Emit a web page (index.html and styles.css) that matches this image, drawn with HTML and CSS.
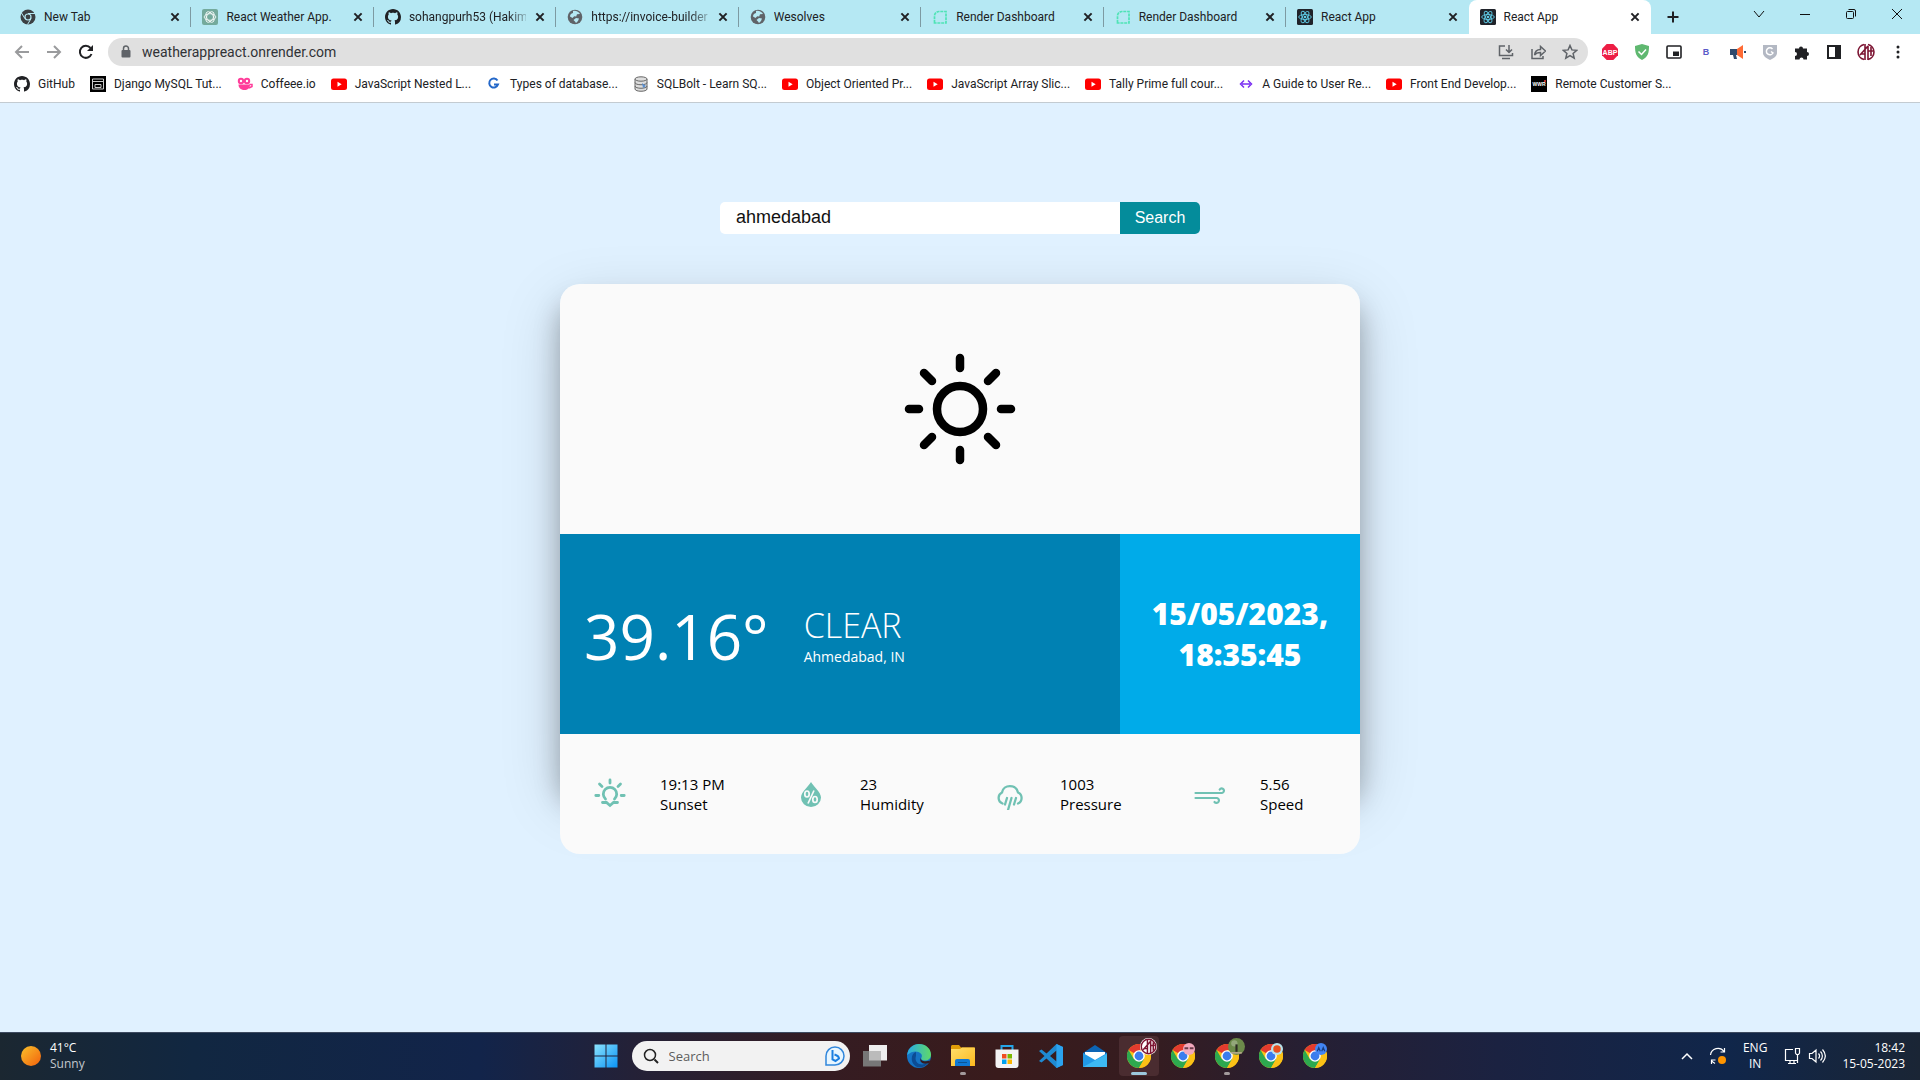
FILE: index.html
```html
<!DOCTYPE html>
<html lang="en">
<head>
<meta charset="utf-8">
<title>React App</title>
<link rel="stylesheet" href="styles.css">
</head>
<body>
<svg class="defs" aria-hidden="true">
  <defs>
    <linearGradient id="g-win" x1="0" y1="0" x2="1" y2="1"><stop offset="0" stop-color="#8be3fd"/><stop offset="1" stop-color="#0a93f5"/></linearGradient>
    <linearGradient id="g-edge" x1="0" y1="0" x2="1" y2="0"><stop offset="0" stop-color="#27a9e6"/><stop offset="1" stop-color="#5fd968"/></linearGradient>
    <linearGradient id="g-folder" x1="0" y1="0" x2="1" y2="1"><stop offset="0" stop-color="#ffdf6b"/><stop offset="1" stop-color="#fbb81e"/></linearGradient>
    <linearGradient id="g-sun" x1="0" y1="0" x2="1" y2="1"><stop offset="0" stop-color="#f9c22b"/><stop offset="1" stop-color="#f2600c"/></linearGradient>
  </defs>
  <symbol id="close" viewBox="0 0 10 10"><path d="M2 2l6 6M8 2L2 8" stroke="#202124" stroke-width="1.7"/></symbol>
  <symbol id="github" viewBox="0 0 16 16"><path fill="#202124" d="M8 0C3.58 0 0 3.58 0 8c0 3.54 2.29 6.53 5.47 7.59.4.07.55-.17.55-.38 0-.19-.01-.82-.01-1.49-2.01.37-2.53-.49-2.69-.94-.09-.23-.48-.94-.82-1.13-.28-.15-.68-.52-.01-.53.63-.01 1.08.58 1.23.82.72 1.21 1.87.87 2.33.66.07-.52.28-.87.51-1.07-1.78-.2-3.64-.89-3.64-3.95 0-.87.31-1.59.82-2.15-.08-.2-.36-1.02.08-2.12 0 0 .67-.21 2.2.82.64-.18 1.32-.27 2-.27s1.36.09 2 .27c1.53-1.04 2.2-.82 2.2-.82.44 1.1.16 1.92.08 2.12.51.56.82 1.27.82 2.15 0 3.07-1.87 3.75-3.65 3.95.29.25.54.73.54 1.48 0 1.07-.01 1.93-.01 2.2 0 .21.15.46.55.38A8.01 8.01 0 0016 8c0-4.42-3.58-8-8-8z"/></symbol>
  <symbol id="globe" viewBox="0 0 16 16"><circle cx="8" cy="8" r="7.3" fill="#5f6368"/><path d="M6 2c3-.6 6 1 7 3l-3 .3-.8 2.2-2-.2L5.500 9 3 7.500c0-2 1-3 3-3.500zM9 9l3 .5L11 12l-2 2-1-1.500L6.500 11z" fill="#b6e9f3"/></symbol>
  <symbol id="render" viewBox="0 0 16 16"><path d="M2.500 14V7a4.500 4.500 0 014.500-4.500h7V14z" fill="none" stroke="#4fe3b6" stroke-width="1.700" stroke-dasharray="3 .8"/></symbol>
  <symbol id="react" viewBox="0 0 16 16"><rect width="16" height="16" rx="1.500" fill="#20232a"/><g fill="none" stroke="#5fcbe6" stroke-width=".9"><ellipse cx="8" cy="8" rx="6.300" ry="2.500"/><ellipse cx="8" cy="8" rx="6.300" ry="2.500" transform="rotate(60 8 8)"/><ellipse cx="8" cy="8" rx="6.300" ry="2.500" transform="rotate(120 8 8)"/></g><circle cx="8" cy="8" r="1.300" fill="#5fcbe6"/></symbol>
  <symbol id="yt" viewBox="0 0 16 16"><rect y="2.500" width="16" height="11.500" rx="2.500" fill="#f00"/><path d="M6.500 5.800v5l4.200-2.500z" fill="#fff"/></symbol>
  <symbol id="chrome" viewBox="0 0 24 24"><circle cx="12" cy="12" r="12" fill="#fbc116"/><path d="M12 12L1.600 6A12 12 0 0122.400 6H12z" fill="#e33b2e"/><path d="M1.600 6A12 12 0 0012 24l5.200-9L12 12 6.800 15z" fill="#2da94f"/><path d="M22.400 6H12l5.200 9L12 24A12 12 0 0022.400 6z" fill="#fbc116"/><circle cx="12" cy="12" r="5.800" fill="#fff"/><circle cx="12" cy="12" r="4.400" fill="#3b7ded"/></symbol>
</svg>

<header class="browser">
  <div class="tabstrip">
    <div class="tabs">
      <div class="tab"><svg class="i16" viewBox="0 0 16 16"><circle cx="8" cy="8" r="7.500" fill="#3c4043"/><path d="M8 4.500h7M5 9.700L1.500 4M11 9.700L7.500 15.500" stroke="#b6e9f3" stroke-width="1"/><circle cx="8" cy="8" r="3.600" fill="#b6e9f3"/><circle cx="8" cy="8" r="2.400" fill="#3c4043"/></svg><span class="title">New Tab</span><button class="x" aria-label="Close tab"><svg><use href="#close"/></svg></button></div>
      <div class="tab"><svg class="i16" viewBox="0 0 16 16"><rect width="16" height="16" rx="2" fill="#74aa9c"/><g fill="none" stroke="#fff" stroke-width=".8"><ellipse cx="8" cy="8" rx="5.800" ry="3.300"/><ellipse cx="8" cy="8" rx="5.800" ry="3.300" transform="rotate(60 8 8)"/><ellipse cx="8" cy="8" rx="5.800" ry="3.300" transform="rotate(120 8 8)"/></g></svg><span class="title">React Weather App.</span><button class="x" aria-label="Close tab"><svg><use href="#close"/></svg></button></div>
      <div class="tab"><svg class="i16"><use href="#github"/></svg><span class="title fade">sohangpurh53 (Hakim</span><button class="x" aria-label="Close tab"><svg><use href="#close"/></svg></button></div>
      <div class="tab"><svg class="i16"><use href="#globe"/></svg><span class="title fade">https://invoice-builder</span><button class="x" aria-label="Close tab"><svg><use href="#close"/></svg></button></div>
      <div class="tab"><svg class="i16"><use href="#globe"/></svg><span class="title">Wesolves</span><button class="x" aria-label="Close tab"><svg><use href="#close"/></svg></button></div>
      <div class="tab"><svg class="i16"><use href="#render"/></svg><span class="title">Render Dashboard</span><button class="x" aria-label="Close tab"><svg><use href="#close"/></svg></button></div>
      <div class="tab"><svg class="i16"><use href="#render"/></svg><span class="title">Render Dashboard</span><button class="x" aria-label="Close tab"><svg><use href="#close"/></svg></button></div>
      <div class="tab last"><svg class="i16"><use href="#react"/></svg><span class="title">React App</span><button class="x" aria-label="Close tab"><svg><use href="#close"/></svg></button></div>
      <div class="tab active"><svg class="i16"><use href="#react"/></svg><span class="title">React App</span><button class="x" aria-label="Close tab"><svg><use href="#close"/></svg></button></div>
    </div>
    <button class="newtab" aria-label="New tab"><svg width="14" height="14" viewBox="0 0 14 14"><path d="M7 1.500v11M1.500 7h11" stroke="#202124" stroke-width="2"/></svg></button>
    <div class="winctl">
      <button aria-label="Search tabs"><svg width="12" height="12" viewBox="0 0 12 12"><path d="M1 3l5 6 5-6"/></svg></button>
      <button aria-label="Minimize"><svg width="12" height="12" viewBox="0 0 12 12"><path d="M1 6.500h10"/></svg></button>
      <button aria-label="Restore"><svg width="12" height="12" viewBox="0 0 12 12"><rect x="1.500" y="3.500" width="7" height="7" rx="1"/><path d="M3.500 1.500H9a1.500 1.500 0 011.500 1.500v5.500"/></svg></button>
      <button aria-label="Close"><svg width="12" height="12" viewBox="0 0 12 12"><path d="M1 1l10 10M11 1L1 11"/></svg></button>
    </div>
  </div>

  <div class="toolbar">
    <nav class="navbtns">
      <button aria-label="Back"><svg class="i16 dim" viewBox="0 0 16 16"><path d="M15 8H2M8 2L2 8l6 6"/></svg></button>
      <button aria-label="Forward"><svg class="i16 dim" viewBox="0 0 16 16"><path d="M1 8h13M8 2l6 6-6 6"/></svg></button>
      <button aria-label="Reload"><svg class="i16" viewBox="0 0 16 16"><path d="M13.500 10A6 6 0 1112.500 4" fill="none" stroke="#202124" stroke-width="2"/><path d="M15 1v6H9z" fill="#202124"/></svg></button>
    </nav>
    <div class="omnibox">
      <svg class="i16" viewBox="0 0 16 16"><rect x="3.500" y="6" width="9" height="7.500" rx="1" fill="#5f6368"/><path d="M5.500 6V4.500a2.500 2.500 0 015 0V6" fill="none" stroke="#5f6368" stroke-width="1.500"/></svg>
      <input class="url" type="text" aria-label="Address" value="weatherappreact.onrender.com">
      <div class="omni-icons">
        <svg class="i16" viewBox="0 0 16 16"><path d="M7 2H1.500v9.500h13V9M4 14.500h8M11 1v7M8 5.500l3 3 3-3"/></svg>
        <svg class="i16" viewBox="0 0 16 16"><path d="M2 5v9.500h11V12M4.500 11c.5-4 3-5.500 6-5.500V2.500L15.500 7l-5 4.500V8.500c-3 0-5 1-6 2.500z"/></svg>
        <svg class="i16" viewBox="0 0 16 16"><path d="M8 1.500l1.900 4.400 4.800.4-3.600 3.200 1.100 4.700L8 11.700l-4.200 2.500 1.100-4.700L1.300 6.300l4.800-.4z"/></svg>
      </div>
    </div>
    <div class="exts">
      <svg class="i16" viewBox="0 0 16 16"><path d="M4.700 0h6.600L16 4.700v6.600L11.300 16H4.700L0 11.300V4.700z" fill="#ed1e45"/><text x="8" y="10.500" text-anchor="middle" class="abp">ABP</text></svg>
      <svg class="i16" viewBox="0 0 16 16"><path d="M8 0l7 2c0 7-1 11-7 14C2 13 1 9 1 2z" fill="#5fb870"/><path d="M4.500 7.500l3 3 4.500-5" fill="none" stroke="#fff" stroke-width="1.500"/></svg>
      <svg class="i16" viewBox="0 0 16 16"><rect x="1" y="2" width="14" height="12" rx="1" fill="none" stroke="#202124" stroke-width="1.600"/><rect x="7" y="7.500" width="6" height="4.500" fill="#202124"/></svg>
      <svg class="i16" viewBox="0 0 16 16"><text x="8" y="11" text-anchor="middle" class="bee">B</text></svg>
      <svg class="i16" viewBox="0 0 16 16"><path d="M0 5h8v6H6l1 4H4L3 11H0z" fill="#2f4a6d"/><path d="M7 5l6-4v14l-6-4z" fill="#ff6b35"/><path d="M14 7h2v2h-2z" fill="#2f4a6d"/></svg>
      <svg class="i16" viewBox="0 0 16 16"><path d="M1 1h14v8c0 3-3 5-7 7-4-2-7-4-7-7z" fill="#b3b8c3"/><path d="M10.500 5a3.500 3.500 0 10.500 4L9 7.500" fill="none" stroke="#fff" stroke-width="1.500"/></svg>
      <svg class="i16" viewBox="0 0 16 16"><path d="M1 4.500h4a2 2 0 114 0h4v3.500a2 2 0 110 4v3.500H9.500a2 2 0 10-4 0H1V12a2 2 0 100-4z" fill="#202124"/></svg>
      <svg class="i16" viewBox="0 0 16 16"><rect x="2" y="2" width="12" height="12" fill="none" stroke="#202124" stroke-width="2"/><path d="M9 2h5v12H9z" fill="#202124"/></svg>
      <svg class="i18" viewBox="0 0 18 18"><g fill="none" stroke="#7c1432" stroke-width="1.600"><path d="M7 1.500A7.700 7.700 0 007 16.500M11 1.500A7.700 7.700 0 0111 16.500"/><path d="M8 1v16M11 3v14M3 12l8-9M4 11h4M11 8h5M14 4v9"/></g></svg>
      <svg class="i16" viewBox="0 0 16 16" fill="#202124"><circle cx="8" cy="3" r="1.500"/><circle cx="8" cy="8" r="1.500"/><circle cx="8" cy="13" r="1.500"/></svg>
    </div>
  </div>

  <nav class="bookmarks">
    <a href="#"><svg class="i16"><use href="#github"/></svg>GitHub</a>
    <a href="#"><svg class="i16" viewBox="0 0 16 16"><path d="M0 0h16v16H0z" fill="#000"/><path d="M2.500 3h11v10h-11zM3 5.500h10M5 8.500h6v3H5z" fill="none" stroke="#ccc"/></svg>Django MySQL Tut...</a>
    <a href="#"><svg class="i16" viewBox="0 0 16 16"><path d="M1.500 8.500h11.500c0 4-2.500 5.500-5.500 5.500s-6-1.500-6-5.500z" fill="#ff3d9a"/><g fill="none" stroke="#ff3d9a" stroke-width="2"><circle cx="4" cy="5" r="2.200"/><circle cx="10" cy="5" r="2.200"/><path d="M12.500 8.500H15v2l-3 1.500" stroke-width="1.500"/></g></svg>Coffeee.io</a>
    <a href="#"><svg class="i16"><use href="#yt"/></svg>JavaScript Nested L...</a>
    <a href="#"><svg class="i16" viewBox="0 0 16 16"><path d="M11.500 4.500A4.500 4.500 0 1012 8.500H8" fill="none" stroke="#2468c9" stroke-width="2"/></svg>Types of database...</a>
    <a href="#"><svg class="i16" viewBox="0 0 16 16"><g fill="#ddd" stroke="#666"><path d="M2 3v10c0 3 12 3 12 0V3"/><ellipse cx="8" cy="3" rx="6" ry="2.200"/><path d="M2 6.500c0 3 12 3 12 0M2 10c0 3 12 3 12 0" fill="none"/></g><path d="M9 7l4 3-3 2z" fill="#5a8fd0"/></svg>SQLBolt - Learn SQ...</a>
    <a href="#"><svg class="i16"><use href="#yt"/></svg>Object Oriented Pr...</a>
    <a href="#"><svg class="i16"><use href="#yt"/></svg>JavaScript Array Slic...</a>
    <a href="#"><svg class="i16"><use href="#yt"/></svg>Tally Prime full cour...</a>
    <a href="#"><svg class="i16" viewBox="0 0 16 16"><path d="M6 4.500L2.500 8 6 11.500M10 4.500L13.500 8 10 11.500M4 8h8" fill="none" stroke="#7b2ff2" stroke-width="1.500"/></svg>A Guide to User Re...</a>
    <a href="#"><svg class="i16"><use href="#yt"/></svg>Front End Develop...</a>
    <a href="#"><svg class="i16" viewBox="0 0 16 16"><path d="M0 0h16v16H0z" fill="#000"/><text x="8" y="10" text-anchor="middle" class="wwr">WWR</text><circle cx="14" cy="5" r="1" fill="#e33"/></svg>Remote Customer S...</a>
  </nav>
</header>

<main class="page">
  <form class="search" onsubmit="return false">
    <input type="text" aria-label="City" value="ahmedabad">
    <button type="submit">Search</button>
  </form>

  <article class="card">
    <section class="hero">
      <svg width="112" height="112" viewBox="0 0 112 112" fill="none" stroke="#000" stroke-width="8.500" stroke-linecap="round"><circle cx="56" cy="56" r="23"/><path d="M56 5v10M56 97v10M5 56h10M97 56h10M20 20l8 8M84 28l8-8M20 92l8-8M84 84l8 8"/></svg>
    </section>
    <section class="band">
      <div class="now">
        <div class="temp">39.16°</div>
        <div class="desc"><div class="cond">CLEAR</div><div class="place">Ahmedabad, IN</div></div>
      </div>
      <div class="date">15/05/2023, 18:35:45</div>
    </section>
    <section class="stats">
      <div class="stat"><svg viewBox="0 -1 32 32" class="line"><path d="M16 1v3M5.500 5l2.500 2.500M26.500 5L24 7.500M1.800 16.500h3M27.200 16.500h3M11.500 20A6.700 6.700 0 1120.500 20M8.500 23.500h4l3.500 3 3.500-3h4" stroke-width="2.800"/></svg><div>19:13 PM<br>Sunset</div></div>
      <div class="stat"><svg viewBox="-1 -1 32 32"><path d="M16 3c2 4 10 10 10 15.500a10 9.500 0 01-20 0C6 13 14 7 16 3z" fill="#70c1b3"/><g fill="none" stroke="#fafafa" stroke-width="1.700"><ellipse cx="12" cy="15" rx="2.200" ry="3"/><ellipse cx="20" cy="20.500" rx="2.200" ry="3"/><path d="M19 11.500l-6 13"/></g></svg><div>23<br>Humidity</div></div>
      <div class="stat"><svg viewBox="-1 -3 32 32" class="line"><path d="M7.500 22.500A6 6 0 017 11.500C8.500 3 21 3 23 11.500A6 6 0 0123 22.500M12 17l-2 6.500M16.500 17l-3.500 12M21 17l-2 6.500" stroke-width="2.300"/></svg><div>1003<br>Pressure</div></div>
      <div class="stat"><svg viewBox="0 -1 32 32" class="line"><path d="M1.500 14h26.500a2.300 2.300 0 10-2.300-3.500M1.500 19h21.500a2.500 2.500 0 11-2.500 4" stroke-width="2.200"/></svg><div>5.56<br>Speed</div></div>
    </section>
  </article>
</main>

<footer class="taskbar">
  <div class="weather">
    <svg width="20" height="20" viewBox="0 0 20 20"><circle cx="10" cy="10" r="10" fill="url(#g-sun)"/></svg>
    <div>41°C<br><span>Sunny</span></div>
  </div>
  <div class="apps">
    <button class="app" aria-label="Start"><svg viewBox="0 0 24 24" fill="url(#g-win)"><path d="M.5.5h11v11H.5zM12.500.5h11v11h-11zM.5 12.500h11v11H.5zM12.500 12.500h11v11h-11z"/></svg></button>
    <label class="tsearch">
      <svg width="16" height="16" viewBox="0 0 16 16"><path d="M11.500 11.500L15 15" stroke="#222" stroke-width="2"/><circle cx="7" cy="7" r="5.500" fill="none" stroke="#222" stroke-width="1.500"/></svg>
      <input type="text" placeholder="Search" aria-label="Search Windows">
      <svg width="20" height="20" viewBox="0 0 20 20"><path d="M1 19V10a9 9 0 119 9z" fill="#e8f6ff" stroke="#3187dc" stroke-width="1.500"/><path d="M7.500 4v9.500l3 1.500 3.500-2.500c0-2-1.500-3-4.500-4" fill="none" stroke="#1b7fe0" stroke-width="2"/></svg>
    </label>
    <button class="app" aria-label="Task view"><svg viewBox="0 0 24 24"><path d="M6 1h18v15.500H6z" fill="#eee"/><path d="M0 7h18v15.500H0z" fill="#777"/><path d="M6 7h12v9.500H6z" fill="#bbb"/></svg></button>
    <button class="app" aria-label="Edge"><svg viewBox="0 0 24 24"><circle cx="12" cy="12" r="12" fill="#1573c4"/><path d="M.2 11C1 4 6 0 12 0c7 0 12 5 12 10.500 0 4-3 6-6 6s-4.500-1.500-3.500-3C17 9 8 4 .2 11z" fill="url(#g-edge)"/><path d="M9 12c-2 6 3 11 12 7-4 6-14 6-16-2-1-5 1-8 4-9z" fill="#0c4c94"/><path d="M14 13.500c-1 3 3 5 9.500 3l-1.500 2.500c-6 2-10.500-1-8-5.500z" fill="#321c22"/></svg></button>
    <button class="app run" aria-label="File Explorer"><svg viewBox="0 0 24 24"><path d="M0 2.500C0 1.700.7 1 1.500 1H8l2 2.500h13V10H0z" fill="#e09c08"/><path d="M0 5h9l2-1.500h13V22H0z" fill="url(#g-folder)"/><path d="M4 22v-5a2 2 0 012-2h11a2 2 0 012 2v5z" fill="#0f78d4"/><path d="M7 18.500h9" stroke="#0a5597"/></svg></button>
    <button class="app" aria-label="Microsoft Store"><svg viewBox="0 0 24 24"><path d="M6.500 6V2h11v4" fill="none" stroke="#25a6e8" stroke-width="2"/><path d="M.5 5.500h23V21a3 3 0 01-3 3h-17a3 3 0 01-3-3z" fill="#f3f3f3"/><path d="M7 10h4.500v4.500H7z" fill="#f04d22"/><path d="M12.500 10H17v4.500h-4.500z" fill="#7bb800"/><path d="M7 15.500h4.500V20H7z" fill="#00a1ee"/><path d="M12.500 15.500H17V20h-4.500z" fill="#fcb500"/></svg></button>
    <button class="app" aria-label="Visual Studio Code"><svg viewBox="0 0 24 24"><path d="M17.500 0L24 3v18l-6.500 3L7.500 14.500 2.500 18.500 0 17l5.500-5L0 7l2.500-1.500 5 4zM17.500 6.500L11 12l6.500 5.500z" fill="#1f8ad2" fill-rule="evenodd"/><path d="M17.500 0L24 3v18l-6.500 3z" fill="#2ba3ef"/></svg></button>
    <button class="app" aria-label="Mail"><svg viewBox="0 0 24 24"><path d="M0 9L12 1l12 8v14H0z" fill="#0c65b5"/><path d="M2 8h20v8H2z" fill="#fff"/><path d="M0 9l12 7 12-7v14H0z" fill="#2199e6"/><path d="M0 23l24-13v13z" fill="#3db9f3"/></svg></button>
    <button class="app on" aria-label="Chrome"><svg viewBox="0 0 24 24"><use href="#chrome"/></svg><svg class="badge" viewBox="0 0 16 16"><circle cx="8" cy="8" r="8" fill="#fff"/><path d="M7 1.500v13M10 2v12M3 11l7-8M4 10h3M10 7h4M12.500 4v8" stroke="#7c1432" stroke-width="1.400"/><circle cx="8" cy="8" r="6.800" fill="none" stroke="#7c1432" stroke-width="1.300"/></svg></button>
    <button class="app" aria-label="Chrome profile 2"><svg viewBox="0 0 24 24"><use href="#chrome"/></svg><svg class="badge sm" viewBox="0 0 16 16"><circle cx="8" cy="8" r="8" fill="#f3a9bd"/><path d="M2 7h5M9 7h5" stroke="#6b3c4a" stroke-width="2.500"/></svg></button>
    <button class="app run" aria-label="Chrome profile 3"><svg viewBox="0 0 24 24"><use href="#chrome"/></svg><svg class="badge" viewBox="0 0 16 16"><circle cx="8" cy="8" r="8" fill="#6c8a4a"/><circle cx="6" cy="5" r="3" fill="#93a77a"/><path d="M8 6v7" stroke="#2c2a24" stroke-width="2"/><path d="M3 14h10" stroke="#b8a98b" stroke-width="1.500"/></svg></button>
    <button class="app" aria-label="Chrome profile 4"><svg viewBox="0 0 24 24"><use href="#chrome"/></svg><svg class="badge sm" viewBox="0 0 16 16"><circle cx="8" cy="8" r="8" fill="#b9e3ea"/><circle cx="8" cy="8" r="5" fill="#e8501e"/></svg></button>
    <button class="app" aria-label="Chrome profile 5"><svg viewBox="0 0 24 24"><use href="#chrome"/></svg><svg class="badge sm" viewBox="0 0 16 16"><circle cx="8" cy="8" r="8" fill="#4285f4"/><path d="M3 11l2-5 2 5M9 11l2-5 2 5" fill="none" stroke="#173d80" stroke-width="1.500"/></svg></button>
  </div>
  <div class="tray">
    <svg width="12" height="12" viewBox="0 0 12 12"><path d="M1 9l5-5 5 5" stroke-width="1.500"/></svg>
    <svg width="18" height="18" viewBox="0 0 18 18"><path d="M1.500 8A7.500 7.500 0 0115 4.500M15.500 1v4h-4M2.500 17v-4h4M2.500 13.500c1 1.500 2 2 3.500 3"/><circle cx="13" cy="13" r="4" fill="#ff9500" stroke="none"/></svg>
    <div class="lang">ENG<br>IN</div>
    <div class="pair">
      <svg width="18" height="18" viewBox="0 0 18 18"><path d="M10 2.500H2.500v11h12V9M5 16.500h8M7 13.500v3M11 13.500v3M12.500 1.500h4V6l-1 1.500h-2L12.500 6zM14.500 7.500V16"/></svg>
      <svg width="18" height="18" viewBox="0 0 18 18"><path d="M1.500 6.500H4L8 3v12l-4-3.500H1.500zM10.500 6.500c1.300 1.500 1.300 3.500 0 5M12.500 4.500c2.500 2.500 2.500 6.500 0 9M14.500 2.500c3.500 4 3.500 9 0 13"/></svg>
    </div>
    <div class="clock">18:42<br>15-05-2023</div>
  </div>
</footer>
</body>
</html>
```
FILE: styles.css
```css
* { box-sizing: border-box; }
html { height: 100%; }
body {
  margin: 0;
  min-height: 100%;
  display: flex;
  flex-direction: column;
  font-family: "Open Sans", "Noto Sans", sans-serif;
  font-size: 12px;
  color: #202124;
  background: #e0f1ff;
}
button, input { font: inherit; border: 0; padding: 0; margin: 0; background: none; color: inherit; outline: 0; }
button { display: flex; align-items: center; justify-content: center; }
svg { flex: none; display: block; }
.defs { position: absolute; width: 0; height: 0; }
.i16 { width: 16px; height: 16px; }
.i18 { width: 18px; height: 18px; }
.browser { font-family: Roboto, "Noto Sans", sans-serif; }

/* Tab strip */
.tabstrip { display: flex; height: 34px; background: #b5e8f3; padding-left: 9px; }
.tabs { display: flex; flex: 0 1 1642px; min-width: 0; }
.tab { flex: 1; min-width: 0; display: flex; align-items: center; gap: 8px; padding: 0 10px 0 11px; position: relative; }
.tab::after { content: ""; position: absolute; right: 0; top: 7px; width: 1px; height: 20px; background: #7d9aa2; }
.tab.last::after, .tab.active::after { display: none; }
.tab.active { background: #fff; border-radius: 8px 8px 0 0; }
.title { flex: 1; min-width: 0; overflow: hidden; white-space: nowrap; }
.fade { -webkit-mask-image: linear-gradient(to right, #000 98px, transparent 124px); mask-image: linear-gradient(to right, #000 98px, transparent 124px); }
.x { width: 12px; height: 16px; }
.x svg { width: 12px; height: 12px; }
.newtab { width: 44px; }
.winctl { display: flex; margin-left: auto; height: 28px; }
.winctl button { width: 46px; }
.winctl svg { fill: none; stroke: #111; stroke-width: 1; }

/* Toolbar */
.toolbar { display: flex; align-items: center; height: 36px; padding: 0 14px; background: #fff; }
.navbtns { display: flex; gap: 16px; }
.dim { fill: none; stroke: #9a9b9d; stroke-width: 2; }
.omnibox { flex: 1; display: flex; align-items: center; gap: 8px; height: 28px; margin: 0 14px; padding: 0 10px; border-radius: 14px; background: #e0e0e0; }
.url { flex: 1; min-width: 0; font-size: 14px; color: #303236; }
.omni-icons { display: flex; gap: 16px; fill: none; stroke: #5f6368; stroke-width: 1.500; }
.exts { display: flex; align-items: center; gap: 16px; }
.exts .i18 { margin: 0 -1px; }
.abp { font: 700 7px "Liberation Sans", sans-serif; fill: #fff; }
.bee { font: 700 9px "Liberation Sans", sans-serif; fill: #5a5ac8; }
.wwr { font: 700 5px "Liberation Sans", sans-serif; fill: #fff; }

/* Bookmarks */
.bookmarks { display: flex; align-items: center; gap: 15px; height: 33px; padding: 0 14px 4px; background: #fff; border-bottom: 1px solid #c3cbd1; white-space: nowrap; }
.bookmarks a { display: flex; align-items: center; gap: 8px; color: inherit; text-decoration: none; }

/* Weather page */
.page { flex: 1; display: flex; flex-direction: column; align-items: center; padding: 99px 20px 40px; }
.search { display: flex; width: 100%; max-width: 480px; height: 32px; font-family: "Liberation Sans", Arial, sans-serif; }
.search input { flex: 1; min-width: 0; padding: 0 16px 2px; font-size: 18px; color: #111; background: #fff; border-radius: 5px 0 0 5px; }
.search button { width: 80px; font-size: 16px; color: #fff; background: #048c9b; border-radius: 0 5px 5px 0; }
.card { width: 100%; max-width: 800px; margin-top: 50px; position: relative; color: #000; }
.card::before { content: ""; position: absolute; inset: 0 0 70px; z-index: -1; border-radius: 20px; box-shadow: 0 20px 60px rgba(0, 0, 0, .17), 0 20px 26px rgba(0, 0, 0, .26); }
.hero { display: flex; align-items: center; justify-content: center; min-height: 250px; background: #fafafa; border-radius: 20px 20px 0 0; }
.band { display: grid; grid-template-columns: 7fr 3fr; min-height: 200px; color: #fff; }
.now { display: flex; align-items: center; gap: 35px; padding: 4px 24px 0; background: #0081b3; }
.temp { font-size: 62px; line-height: 80px; }
.cond { font-size: 34px; line-height: 40px; font-weight: 300; }
.place { margin-top: 2px; font-size: 14px; line-height: 20px; }
.date { display: flex; align-items: center; justify-content: center; padding: 0 20px; text-align: center; font-size: 30px; line-height: 41px; font-weight: 800; background: #00abe9; }
.stats { display: grid; grid-template-columns: repeat(4, 1fr); min-height: 120px; background: #fafafa; border-radius: 0 0 20px 20px; }
.stat { display: flex; align-items: center; gap: 34px; padding-left: 34px; font-size: 15px; line-height: 20px; }
.stat svg { width: 32px; height: 32px; }
.line { fill: none; stroke: #70c1b3; stroke-linecap: round; }

/* Taskbar */
.taskbar { display: grid; grid-template-columns: 1fr auto 1fr; align-items: center; height: 48px; padding-bottom: 2px; color: #fff; line-height: 16px; border-top: 1px solid #3d4a60; background: linear-gradient(90deg, #1b2731 0, #112741 10%, #12244a 25%, #242137 33%, #351c22 43%, #391b1c 52%, #351c20 60%, #261f33 68%, #1b2241 78%, #10264a 90%, #1a2535 100%); }
.weather { display: flex; align-items: center; gap: 9px; padding-left: 21px; }
.weather span { color: #c3c8ce; }
.apps { display: flex; align-items: center; gap: 4px; }
.app { position: relative; width: 40px; height: 40px; border-radius: 4px; }
.app > svg { width: 24px; height: 24px; }
.app .badge { position: absolute; top: 2px; right: 2px; width: 17px; height: 17px; }
.app .badge.sm { top: 7px; right: 8px; width: 12px; height: 12px; }
.app.on { background: #4a2c30; }
.run::after, .on::after { content: ""; position: absolute; left: 17px; bottom: 1px; width: 6px; height: 3px; border-radius: 2px; background: #a39a9c; }
.on::after { left: 12px; width: 16px; background: #9cc8dd; }
.tsearch { display: flex; align-items: center; gap: 10px; width: 218px; height: 30px; margin: 0 1px 0 2px; padding: 0 5px 0 11px; border-radius: 15px; background: #f2f2f2; }
.tsearch input { flex: 1; min-width: 0; font-size: 13px; }
.tsearch input::placeholder { color: #5d5d5d; opacity: 1; }
.tray { display: flex; align-items: center; justify-content: flex-end; gap: 16px; padding-right: 15px; }
.tray svg { fill: none; stroke: #fff; stroke-width: 1.200; }
.pair { display: flex; gap: 7px; }
.lang { text-align: center; }
.clock { text-align: right; }
```
